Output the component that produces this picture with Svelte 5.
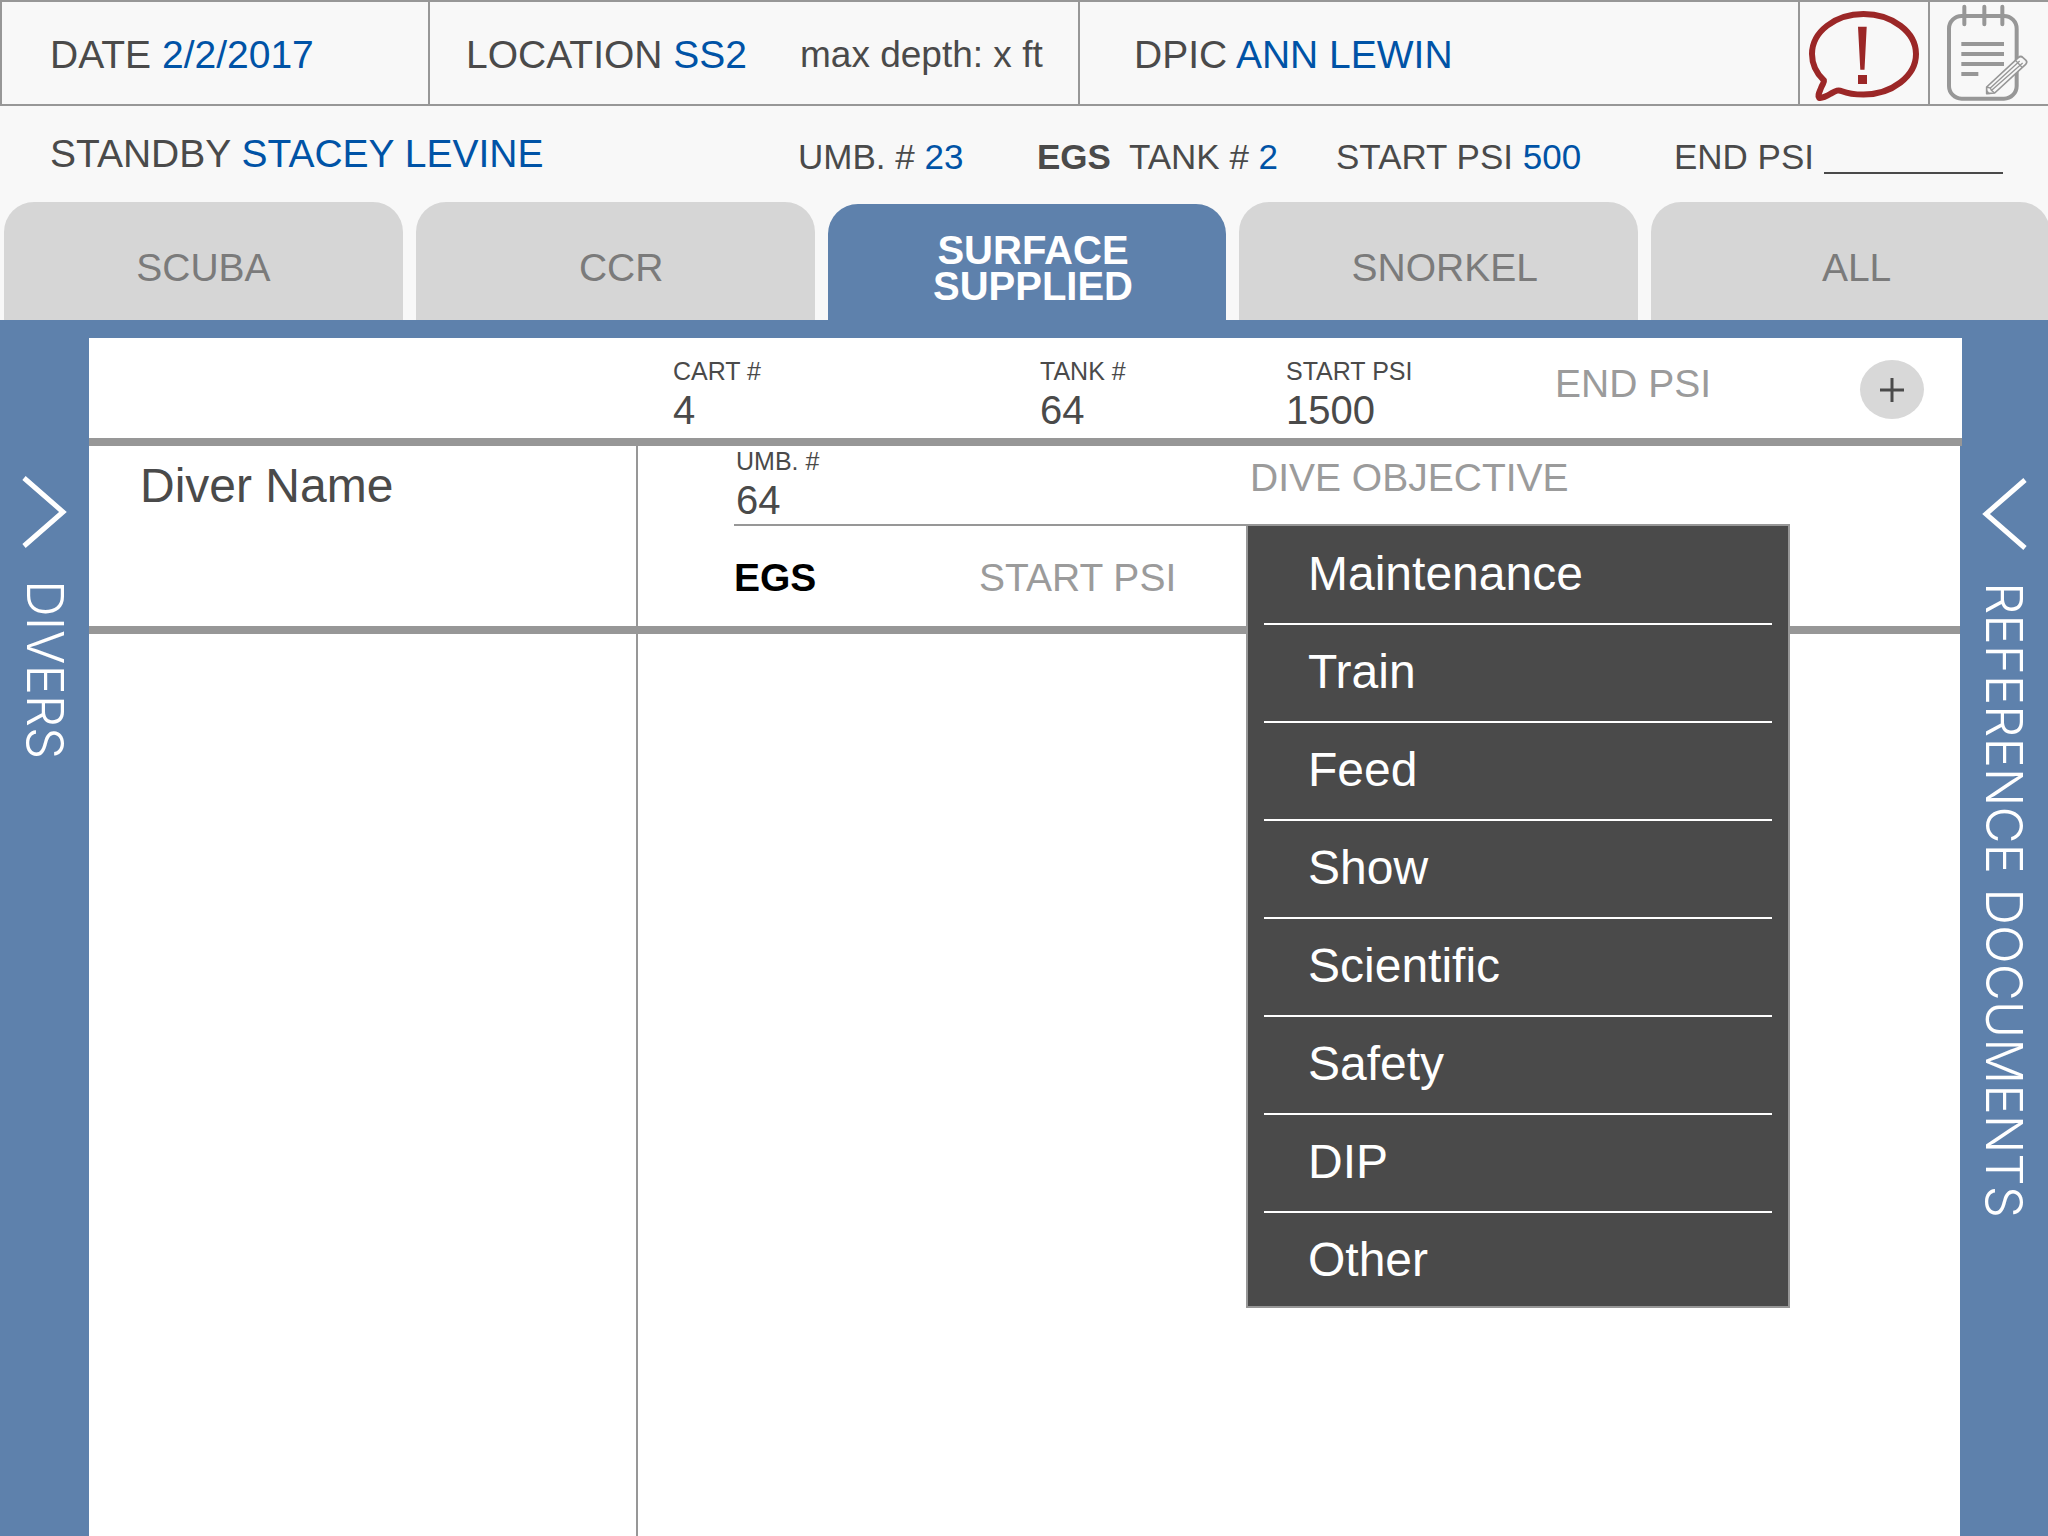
<script>
  const tabs = [
    { id: 'scuba', label: 'SCUBA' },
    { id: 'ccr', label: 'CCR' },
    { id: 'surface', label: 'SURFACE SUPPLIED' },
    { id: 'snorkel', label: 'SNORKEL' },
    { id: 'all', label: 'ALL' }
  ];
  const objectives = ['Maintenance', 'Train', 'Feed', 'Show', 'Scientific', 'Safety', 'DIP', 'Other'];

  let activeTab = $state('surface');
  let menuOpen = $state(true);
  let objective = $state('DIVE OBJECTIVE');

  function choose(name) {
    objective = name;
    menuOpen = false;
  }
</script>

<div class="page">
  <header class="summary">
    <div class="cell date"><span>DATE <span class="value">2/2/2017</span></span></div>
    <div class="cell location">
      <span>LOCATION <span class="value">SS2</span></span>
      <span class="depth">max depth: x ft</span>
    </div>
    <div class="cell dpic"><span>DPIC <span class="value">ANN LEWIN</span></span></div>
    <button class="cell icon alert" aria-label="Alert">
      <svg width="110" height="90" viewBox="0 0 110 90" aria-hidden="true">
        <path
          d="M15 69.5C7 62 3 53 3 43C3 21 26 3 54.5 3S107 21 107 43S83 83.500 54.500 83.500C46 83.500 38 82.200 33 80.200C29 78.600 27 79.800 22 82.500C18 85 12 87.500 10 86.800C8.300 85 10.500 81 12 77C13.500 73 15.500 71 15 69.500Z"
          fill="none" stroke="#9b2727" stroke-width="6" stroke-linejoin="round" />
        <path d="M49 15.700H57.700L55.500 58.700H51.300ZM49 64H58V73H49Z" fill="#9b2727" />
      </svg>
    </button>
    <button class="cell icon notes" aria-label="Notes">
      <svg width="83" height="98" viewBox="501 9 249 294" aria-hidden="true" fill="none" stroke="#979797">
        <rect x="510" y="48" width="203" height="248" rx="38" stroke-width="12" />
        <path d="M556 20V73M616 20V73M670 20V73" stroke-width="12" stroke-linecap="round" />
        <path d="M547 132H675M547 162H675M547 192H675M547 222H598" stroke-width="12" />
        <path d="M623 281V261L718 173Q725 166 732 173L741 181Q746 187 740 193L647 279Z" fill="#f8f8f8" stroke-width="5" stroke-linejoin="round" />
        <path d="M623 261L634 264L637 271L647 279M634 264L722 183M638 271L731 189M709 181L729 202" stroke-width="4" />
        <path d="M623 281V271L633 281Z" fill="#979797" stroke-width="2" />
      </svg>
    </button>
  </header>

  <section class="standby">
    <div class="person">STANDBY <span class="value">STACEY LEVINE</span></div>
    <div class="detail">UMB. # <span class="value">23</span></div>
    <div class="detail egs"><b>EGS</b><span>TANK # <span class="value">2</span></span></div>
    <div class="detail">START PSI <span class="value">500</span></div>
    <div class="detail end">
      <label for="standby-end">END PSI</label>
      <input id="standby-end" type="text" />
    </div>
  </section>

  <div class="tabs" role="tablist">
    {#each tabs as tab}
      <button
        class="tab"
        class:active={activeTab === tab.id}
        role="tab"
        aria-selected={activeTab === tab.id}
        onclick={() => (activeTab = tab.id)}><span>{tab.label}</span></button>
    {/each}
  </div>

  <main class="workspace">
    <button class="drawer left">
      <svg width="44" height="72" viewBox="0 0 44 72" aria-hidden="true">
        <path d="M1 2L40 36L1 70" fill="none" stroke="#fff" stroke-width="5" />
      </svg>
      <span>DIVERS</span>
    </button>

    <div class="panel">
      <div class="cart">
        <div class="field first">
          <span class="label">CART #</span>
          <span class="number">4</span>
        </div>
        <div class="field">
          <span class="label">TANK #</span>
          <span class="number">64</span>
        </div>
        <div class="field">
          <span class="label">START PSI</span>
          <span class="number">1500</span>
        </div>
        <input class="psi lowered" type="text" placeholder="END PSI" aria-label="Cart end PSI" />
        <button class="add lowered" aria-label="Add tank">
          <svg width="24" height="24" viewBox="0 0 24 24" aria-hidden="true">
            <path d="M12 0V24M0 12H24" stroke="#4a4a4a" stroke-width="3" />
          </svg>
        </button>
      </div>

      <div class="diver">
        <div class="name">Diver Name</div>
        <div class="dive">
          <div class="line top">
            <div class="field">
              <span class="label">UMB. #</span>
              <span class="number">64</span>
            </div>
            <div class="objective">
              <button class="trigger" aria-haspopup="menu" aria-expanded={menuOpen} onclick={() => (menuOpen = !menuOpen)}>{objective}</button>
              {#if menuOpen}
                <div class="menu" role="menu">
                  {#each objectives as name}
                    <button role="menuitem" onclick={() => choose(name)}>{name}</button>
                  {/each}
                </div>
              {/if}
            </div>
          </div>
          <div class="line bottom">
            <b>EGS</b>
            <input class="psi" type="text" placeholder="START PSI" aria-label="EGS start PSI" />
          </div>
        </div>
      </div>

      <div class="blank"><div></div></div>
    </div>

    <button class="drawer right">
      <svg width="44" height="72" viewBox="0 0 44 72" aria-hidden="true">
        <path d="M43 2L4 36L43 70" fill="none" stroke="#fff" stroke-width="5" />
      </svg>
      <span>REFERENCE DOCUMENTS</span>
    </button>
  </main>
</div>

<style>
  :global(body) {
    margin: 0;
  }

  .page,
  .page * {
    box-sizing: border-box;
  }

  .page {
    display: flex;
    flex-direction: column;
    min-height: 100vh;
    overflow-x: hidden;
    background: #f8f8f8;
    color: #4a4a4a;
    font-family: 'Liberation Sans', Arial, Helvetica, sans-serif;
    font-size: 39px;
    line-height: 48px;
  }

  button,
  input {
    margin: 0;
    padding: 0;
    border: 0;
    border-radius: 0;
    background: none;
    color: inherit;
    font: inherit;
  }

  input {
    min-width: 0;
    width: 100%;
  }

  button {
    cursor: pointer;
  }

  svg {
    display: block;
    flex: none;
    overflow: visible;
  }

  .value {
    color: #0053a6;
  }

  .summary {
    display: grid;
    grid-template-columns: 430fr 650fr 720fr 130px 118px;
    border-top: 2px solid #979797;
    border-bottom: 2px solid #979797;
    white-space: nowrap;
  }

  .cell {
    display: flex;
    align-items: center;
    height: 102px;
    padding-top: 3px;
    border-right: 2px solid #979797;
  }

  .date {
    padding-left: 48px;
    border-left: 2px solid #979797;
  }

  .location {
    gap: 53px;
    padding-left: 36px;
  }

  .depth {
    font-size: 37px;
  }

  .dpic {
    padding-left: 54px;
  }

  .icon {
    justify-content: center;
  }

  .alert {
    padding-top: 6px;
  }

  .notes {
    justify-content: flex-start;
    padding: 0 0 2px 16px;
    border-right: 0;
  }

  .standby {
    display: grid;
    grid-template-columns: 798fr 239fr 299fr 338fr 374fr;
    padding: 24px 0;
    white-space: nowrap;
  }

  .person {
    padding-left: 50px;
  }

  .detail {
    height: 48px;
    padding-top: 3px;
    font-size: 35px;
  }

  .egs {
    display: flex;
    gap: 18px;
  }

  .end {
    display: flex;
    gap: 10px;
    padding-right: 45px;
  }

  .end input {
    flex: 1;
    height: 41px;
    border-bottom: 2px solid #4a4a4a;
  }

  .tabs {
    display: grid;
    grid-template-columns: repeat(5, 1fr);
    gap: 13px;
    height: 118px;
    margin: 0 -2px 0 4px;
  }

  .tab {
    display: flex;
    align-items: center;
    justify-content: center;
    padding-top: 14px;
    border-radius: 30px 30px 0 0;
    background: #d6d6d6;
    color: #7b7b7b;
  }

  .tab + .tab {
    padding-left: 12px;
  }

  .tab.active {
    margin-top: 2px;
    padding-top: 12px;
    background: #5e81ac;
    color: #fff;
    font-size: 40px;
    font-weight: 700;
    line-height: 36px;
  }

  .tab.active span {
    width: min-content;
  }

  .workspace {
    display: grid;
    grid-template-columns: 89px 1fr 88px;
    flex: 1;
    background: #5e81ac;
  }

  .drawer {
    display: flex;
    flex-direction: column;
    align-items: center;
    gap: 32px;
    padding-top: 156px;
    color: #fff;
    font-family: Inter, 'Liberation Sans', sans-serif;
    font-size: 51px;
    font-weight: 300;
    line-height: 56px;
  }

  .drawer span {
    writing-mode: vertical-rl;
    white-space: nowrap;
  }

  .drawer.right {
    padding-top: 158px;
  }

  .panel {
    display: flex;
    flex-direction: column;
    margin-top: 18px;
    background: #fff;
  }

  .cart {
    display: grid;
    grid-template-columns: 584fr 367fr 246fr 269fr 305fr 64px;
    align-items: start;
    height: 108px;
    margin-right: -2px;
    padding: 18px 38px 0 0;
    border-bottom: 8px solid #979797;
    background: #fff;
  }

  .field {
    display: flex;
    flex-direction: column;
  }

  .field.first {
    grid-column: 2;
  }

  .label {
    font-size: 25px;
    line-height: 30px;
  }

  .number {
    font-size: 40px;
  }

  .lowered {
    margin-top: 4px;
  }

  .psi {
    height: 48px;
  }

  .psi::placeholder {
    color: #9b9b9b;
    opacity: 1;
  }

  .add {
    display: flex;
    align-items: center;
    justify-content: center;
    width: 64px;
    height: 59px;
    border-radius: 50%;
    background: #d8d8d8;
  }

  .diver,
  .blank {
    display: grid;
    grid-template-columns: 549fr 1322fr;
  }

  .diver {
    border-bottom: 8px solid #979797;
  }

  .blank {
    flex: 1;
  }

  .name,
  .blank > div {
    border-right: 2px solid #979797;
  }

  .name {
    padding: 12px 0 0 51px;
    font-size: 48px;
    line-height: 56px;
  }

  .dive {
    padding: 0 170px 0 96px;
  }

  .line {
    display: grid;
  }

  .line .field {
    padding-left: 2px;
  }

  .top {
    grid-template-columns: 512fr 544fr;
    border-bottom: 2px solid #979797;
  }

  .objective {
    position: relative;
    padding: 8px 0 0 4px;
  }

  .trigger {
    color: #9b9b9b;
  }

  .menu {
    position: absolute;
    top: 100%;
    left: 0;
    right: 0;
    z-index: 1;
    display: flex;
    flex-direction: column;
    padding: 1px 16px 0;
    border: 2px solid #979797;
    background: #4a4a4a;
    color: #fff;
    font-size: 48px;
    line-height: 56px;
  }

  .menu button {
    padding: 19px 0 21px 44px;
    border-bottom: 2px solid #fff;
    text-align: left;
  }

  .menu button:last-child {
    padding-bottom: 18px;
    border-bottom: 0;
  }

  .bottom {
    grid-template-columns: 245fr 811fr;
    padding: 28px 0 24px;
  }

  .bottom b {
    color: #000;
  }
</style>
